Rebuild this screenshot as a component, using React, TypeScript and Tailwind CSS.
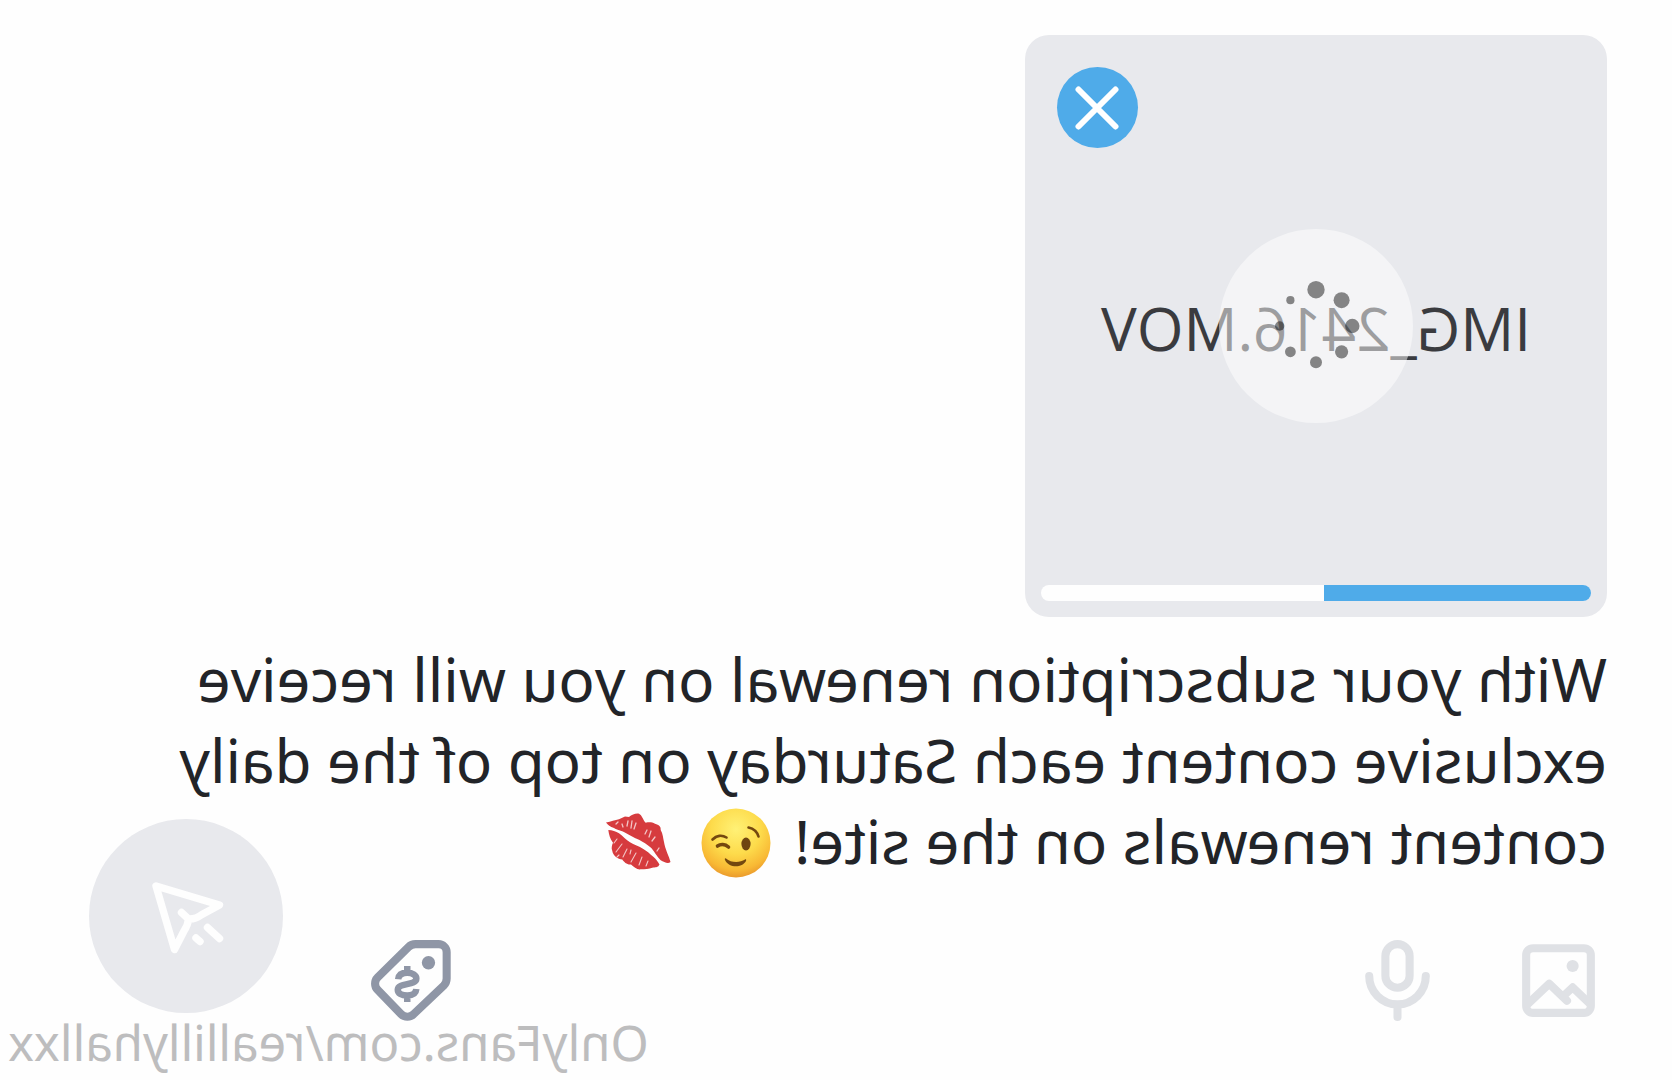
import type { ReactNode } from 'react';

const UPLOAD = { name: 'IMG_2416.MOV', progress: 48.5 };

// Loader dots, clockwise around a 36px ring
const DOTS = [
  { x: 0, y: -36.3, r: 8.7 },
  { x: -25.6, y: -25.8, r: 8 },
  { x: -36.3, y: 0, r: 7.2 },
  { x: -25.6, y: 25.8, r: 6.6 },
  { x: 0, y: 36.3, r: 6 },
  { x: 25.6, y: 25.8, r: 5.4 },
  { x: 36.3, y: 0, r: 4.7 },
  { x: 25.6, y: -25.8, r: 4.1 },
];

function ToolIcon({ children }: { children: ReactNode }) {
  return (
    <svg
      viewBox="0 0 24 24"
      className="size-full"
      fill="none"
      stroke="currentColor"
      strokeWidth="2"
      strokeLinecap="round"
      strokeLinejoin="round"
      aria-hidden="true"
    >
      {children}
    </svg>
  );
}

function Spinner() {
  return (
    <svg viewBox="-97 -97 194 194" className="size-[194px]" aria-hidden="true">
      <circle r="97" fill="#fff" fillOpacity="0.5" />
      {DOTS.map((dot) => (
        <circle key={`${dot.x},${dot.y}`} cx={dot.x} cy={dot.y} r={dot.r} fill="#000" fillOpacity="0.46" />
      ))}
    </svg>
  );
}

function WinkEmoji() {
  return (
    <svg viewBox="0 0 70 70" className="mr-3 ml-2 inline-block size-[70px] align-[-14px]" role="img" aria-label="winking face">
      <defs>
        <radialGradient id="face" cx="0.5" cy="0.3" r="0.72">
          <stop offset="0" stopColor="#fff176" />
          <stop offset="0.5" stopColor="#fddb4b" />
          <stop offset="0.82" stopColor="#f8b834" />
          <stop offset="1" stopColor="#e8952c" />
        </radialGradient>
      </defs>
      <circle cx="35" cy="35" r="34.5" fill="url(#face)" />
      <ellipse cx="25" cy="36" rx="4.6" ry="6.4" fill="#6f4610" />
      <g fill="none" stroke="#74480f" strokeLinecap="round">
        <path d="M12.5 28.5C14 23.5 18 20.5 22.5 19.5" strokeWidth="2.6" />
        <path d="M44.5 29.5C49 26.7 54.5 27.3 58.5 31.5" strokeWidth="2.6" />
        <path d="M42.5 39C46 36 50.5 36 53.5 38" strokeWidth="3.6" />
      </g>
      <path d="M26 51.5C31 55 40 55 45 50.5C46 50 46.5 51 46 52C42.5 60 29 60.5 25 53C24.5 51.8 25 51 26 51.5Z" fill="#74480f" />
    </svg>
  );
}

function KissEmoji() {
  return (
    <svg viewBox="0 0 68 62" className="inline-block h-[62px] w-[68px] align-[-10px]" role="img" aria-label="kiss mark">
      <path
        d="M67 10.5C62 9.5 58 8 54 7.3L48 4.5L44 5C41 3 38 1.2 34 1.7C31 3 30 8 27.3 10.7C24 10 21 10 18 11.7C14 13 12 14 12.3 18C10 22 10 26 9 30C8 37 4 44 2.5 50C5 52.5 9 50 12.3 48.3C16 45 18 40 21.700 36C26 32 30 30 34 27.700C39 26 43 23 47.300 21C52 18 56 18 59 16C63 15 65 13 67 10.500Z"
        fill="#d63b3e"
      />
      <path
        d="M64.700 18C61 18 57 19.500 54 21.300C50 24 47 28 43 30.300C39 33 34 34 29.700 37C26 39 23 42 19.700 44.700C17 47 15 50 13.500 52.500C15 56 18 55 20.700 55.700C24 57 28 57 32 57.300C36 58 39 55 42 52.500C46 53 49 50 50.700 47.500C55 47 60 44 60.700 39C62 36 61 33 60 30.700C63 27 64 23 64.700 18Z"
        fill="#d63b3e"
      />
      <g fill="none" stroke="#fff" strokeLinecap="round" strokeOpacity="0.7">
        <path d="M41 9l1 7M45 9l1 5M37 11l2 6M51 12l-1 3M22 19l2 6M18 25l3 4M26 18l2 4M14 36l2 3M55 10l2 2" strokeWidth="1.3" />
        <path d="M56 27l3 4M51 32l6 8M46 37l4 8M37 41l5 9M31 45l3 8M25 49l2 5M42 38l1 4M54 43l2 2" strokeWidth="1.1" />
      </g>
    </svg>
  );
}

function UploadCard() {
  return (
    <section className="relative flex aspect-square w-[582px] items-center justify-center rounded-3xl bg-[#e8e9ed]">
      <span className="pt-1 font-['Open_Sans','Noto_Sans',sans-serif] text-[60px] leading-[81px] text-[#3a3b3f]">
        {UPLOAD.name}
      </span>

      <div className="absolute inset-0 flex items-center justify-center">
        <Spinner />
      </div>

      <button
        type="button"
        aria-label="Remove file"
        className="absolute top-8 right-8 flex size-[81px] items-center justify-center rounded-full bg-[#4fabe9] text-white"
      >
        <svg viewBox="0 0 44 44" className="size-11" fill="none" stroke="currentColor" strokeWidth="6" strokeLinecap="round" aria-hidden="true">
          <path d="M3.5 3.5l37 37M40.5 3.5l-37 37" />
        </svg>
      </button>

      <div
        role="progressbar"
        aria-label="Upload progress"
        aria-valuenow={UPLOAD.progress}
        className="absolute inset-x-4 bottom-4 h-4 overflow-hidden rounded-full bg-[#fefefe]"
      >
        <div className="h-full bg-[#4fabe9]" style={{ width: `${UPLOAD.progress}%` }} />
      </div>
    </section>
  );
}

function Toolbar() {
  return (
    <div className="mt-[50px] flex items-start text-[#dfe1e5]">
      <button type="button" aria-label="Add media" className="size-[97px]">
        <ToolIcon>
          <rect x="4" y="4" width="16" height="16" rx="1.7" />
          <circle cx="8.5" cy="8.4" r="1.5" fill="currentColor" stroke="none" />
          <path d="M4.4 17.6L8.5 13.7L10.4 15.5M19.6 17.8L14.3 12.8L9.9 17" />
        </ToolIcon>
      </button>
      <button type="button" aria-label="Record voice" className="ml-16 size-[97px]">
        <ToolIcon>
          <rect x="9" y="3" width="6" height="10.8" rx="3" />
          <path d="M5 10.9a7 7 0 0 0 14 0M12 18v3" />
        </ToolIcon>
      </button>
      <button type="button" aria-label="Set price" className="ml-auto size-[97px] text-[#8f96a6]">
        <ToolIcon>
          <path d="M5.3 3h5.7a2.5 2.5 0 0 1 1.77.73l7.6 7.5a2.2 2.2 0 0 1 0 3.1l-5.8 6a2.2 2.2 0 0 1-3.1 0L4.03 13.27a2.5 2.5 0 0 1-.73-1.77V5a2 2 0 0 1 2-2z" />
          <circle cx="7.8" cy="7.6" r="1.65" fill="currentColor" stroke="none" />
          <path
            d="M15.3 11.7C15.2 10.6 14.3 10.1 13.05 10.1C11.7 10.1 10.8 10.7 10.8 11.5C10.8 13.4 15.4 12.4 15.4 14.3C15.4 15.2 14.5 15.7 13.05 15.7C11.8 15.7 10.9 15.2 10.8 14.1M13.05 8.4V10.2M13.05 15.6V17.3"
            strokeWidth="1.6"
            strokeLinecap="butt"
          />
        </ToolIcon>
      </button>
      <button
        type="button"
        aria-label="Send"
        className="-mt-[113px] ml-20 size-[194px] shrink-0 rounded-full bg-[#e8e9ed] text-[#fefefe]"
      >
        <svg
          viewBox="0 0 194 194"
          className="size-full"
          fill="none"
          stroke="currentColor"
          strokeWidth="7.4"
          strokeLinecap="round"
          strokeLinejoin="round"
          aria-hidden="true"
        >
          <path d="M127 67L63.5 86L81 95.5Q88 100.5 94.5 100Q95 106 99 112L108.500 130.500ZM94.500 100L101.500 93.500" />
          <path d="M75.500 108.500L63.500 119.500M87 119L83 122.500" />
        </svg>
      </button>
    </div>
  );
}

export default function App() {
  return (
    <main className="relative min-h-screen -scale-x-100 overflow-hidden bg-[#fefefe] pt-[35px] pr-[89px] pl-[65px] font-['Noto_Sans','Open_Sans',sans-serif]">
      <UploadCard />

      <p className="mt-[22px] text-[60px] leading-[81px] text-[#222428]">
        With your subscription renewal on you will receive exclusive content each Saturday on top of the daily content
        renewals on the site! <WinkEmoji /> <KissEmoji />
      </p>

      <Toolbar />

      <a href="#profile" className="absolute right-2 bottom-2 text-[49px] leading-[60px] text-[#bdbdbe]">
        OnlyFans.com/reallillyhallxx
      </a>
    </main>
  );
}
